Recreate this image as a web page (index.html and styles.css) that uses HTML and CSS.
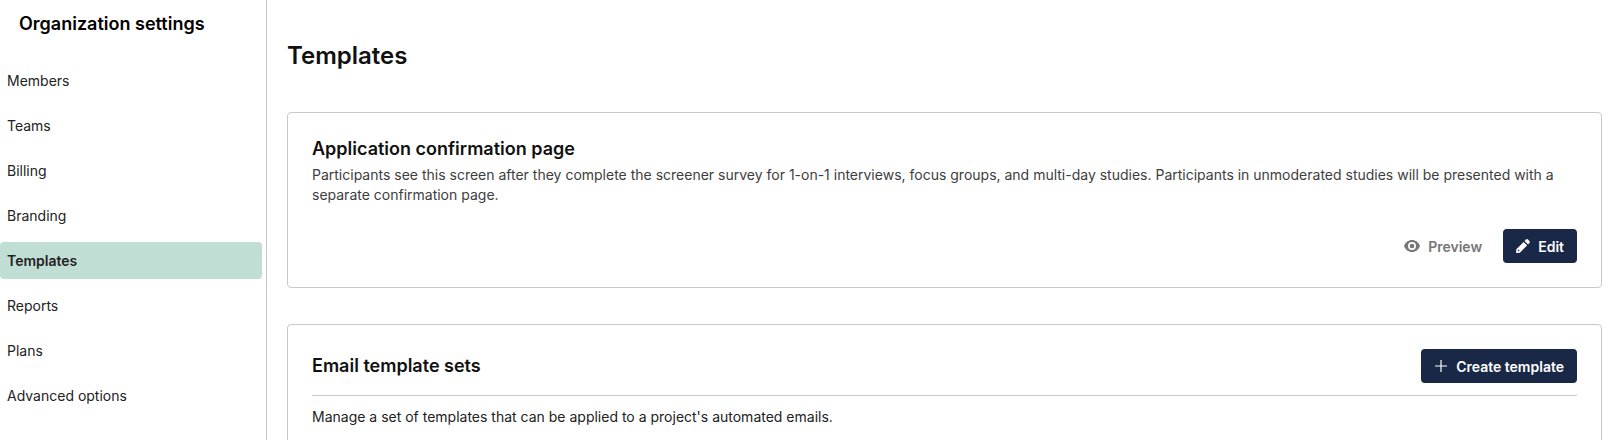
FILE: index.html
```html
<!DOCTYPE html>
<html lang="en">

<head>
    <meta charset="UTF-8">
    <meta name="viewport" content="width=device-width, initial-scale=1.0">
    <title>Organization settings</title>
    <link rel="stylesheet" href="styles.css">
</head>

<body>
    <div class="layout">
        <aside class="sidebar">
            <h2 class="sidebar-title">Organization settings</h2>
            <nav class="nav">
                <a class="nav-item" href="#">Members</a>
                <a class="nav-item" href="#">Teams</a>
                <a class="nav-item" href="#">Billing</a>
                <a class="nav-item" href="#">Branding</a>
                <a class="nav-item active" href="#">Templates</a>
                <a class="nav-item" href="#">Reports</a>
                <a class="nav-item" href="#">Plans</a>
                <a class="nav-item" href="#">Advanced options</a>
            </nav>
        </aside>

        <main class="main">
            <h1 class="page-title">Templates</h1>

            <section class="card">
                <h3 class="card-title">Application confirmation page</h3>
                <p class="card-text">Participants see this screen after they complete the screener survey for 1-on-1 interviews, focus groups, and multi-day studies. Participants in unmoderated studies will be presented with a separate confirmation page.</p>
                <div class="card-actions">
                    <button class="btn btn-plain">
                        <svg class="icon icon-eye" viewBox="0 0 16 12" aria-hidden="true">
                            <path fill-rule="evenodd" d="M8 0C4.4 0 1.4 2.3 0 6c1.4 3.7 4.4 6 8 6s6.6-2.3 8-6c-1.4-3.700-4.400-6-8-6zm0 10a4 4 0 1 1 0-8 4 4 0 0 1 0 8z" />
                            <circle cx="8" cy="6" r="2.300" />
                        </svg>
                        Preview
                    </button>
                    <button class="btn btn-dark">
                        <svg class="icon" viewBox="0 0 16 16" aria-hidden="true">
                            <path d="M11.300.7a1.600 1.600 0 0 1 2.300 0l1.700 1.700a1.600 1.600 0 0 1 0 2.300l-1.500 1.500-4-4zM8.700 3.300l4 4-8.300 8.300-4.400.4.400-4.400zM2.500 11.800l-.5 2.200 2.200-.5z" />
                        </svg>
                        Edit
                    </button>
                </div>
            </section>

            <section class="card">
                <div class="card-header">
                    <h3 class="card-title">Email template sets</h3>
                    <button class="btn btn-dark">
                        <svg class="icon" viewBox="0 0 14 14" aria-hidden="true">
                            <path class="plus" d="M7 1v12M1 7h12" />
                        </svg>
                        Create template
                    </button>
                </div>
                <p class="card-note">Manage a set of templates that can be applied to a project's automated emails.</p>
            </section>
        </main>
    </div>
</body>

</html>
```

FILE: styles.css
```css
body {
    font-family: Inter, "Liberation Sans", sans-serif;
    margin: 0;
    padding: 0;
    height: 440px;
    overflow: hidden;
    background-color: #fff;
    color: #111;
}

.layout {
    display: flex;
    height: 440px;
}

.sidebar {
    box-sizing: border-box;
    width: 267px;
    flex-shrink: 0;
    padding-right: 4px;
    border-right: 1px solid #c9c9c9;
}

.sidebar-title {
    margin: 0 0 26px 19px;
    padding-top: 12px;
    font-size: 18px;
    line-height: 24px;
    font-weight: 600;
    color: #000;
}

.nav {
    display: flex;
    flex-direction: column;
    gap: 8px;
}

.nav-item {
    display: block;
    height: 37px;
    padding-left: 7px;
    border-radius: 4px;
    font-size: 14px;
    line-height: 37px;
    color: #222;
    text-decoration: none;
}

.nav-item.active {
    background-color: #c1ded5;
    font-weight: 600;
}

.main {
    flex: 1;
    min-width: 0;
    padding: 36px 18px 0 20px;
}

.page-title {
    margin: 0 0 36px;
    font-size: 24px;
    line-height: 40px;
    font-weight: 600;
}

.card {
    padding: 24px;
    margin-bottom: 36px;
    border: 1px solid #c9c9c9;
    border-radius: 4px;
    background-color: #fff;
}

.card-title {
    margin: 0 0 4px;
    font-size: 18px;
    line-height: 24px;
    font-weight: 600;
}

.card-text {
    margin: 0;
    font-size: 14px;
    line-height: 20px;
    color: #3d3d3d;
}

.card-actions {
    display: flex;
    justify-content: flex-end;
    gap: 8px;
    margin-top: 24px;
}

.card-header {
    display: flex;
    align-items: center;
    justify-content: space-between;
    padding-bottom: 12px;
    border-bottom: 1px solid #c9c9c9;
}

.card-header .card-title {
    margin: 0;
}

.card-note {
    margin: 11px 0 0;
    font-size: 14px;
    line-height: 20px;
    color: #222;
}

.btn {
    display: inline-flex;
    align-items: center;
    gap: 8px;
    height: 34px;
    padding: 0 13px;
    border: none;
    border-radius: 4px;
    font-family: inherit;
    font-size: 14px;
    font-weight: 600;
    cursor: pointer;
}

.btn-dark {
    background-color: #1a2847;
    color: #fff;
}

.btn-plain {
    background: none;
    color: #767676;
}

.icon {
    width: 14px;
    height: 14px;
    fill: currentColor;
}

.icon-eye {
    width: 16px;
    height: 12px;
}

.plus {
    fill: none;
    stroke: currentColor;
    stroke-width: 1.200;
}
```
